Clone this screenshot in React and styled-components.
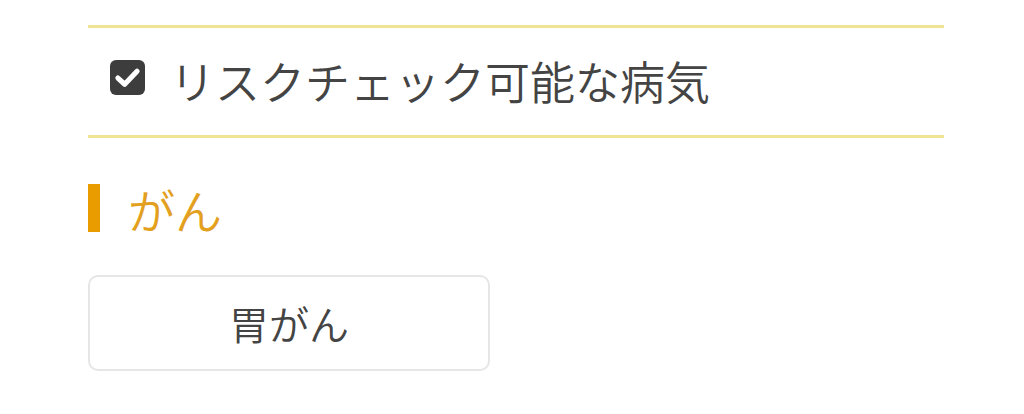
import styled, { createGlobalStyle } from "styled-components";

//==========================================================================
//  *** Styled components   ***

const GlobalStyle = createGlobalStyle`
    html, body {
        margin: 0;
        padding: 0;
        background: #ffffff;
    }
    body {
        font-family: "Noto Sans CJK JP", "Noto Sans", sans-serif;
        color: #444444;
    }
`

const Page = styled.main`
    width: 856px;
    margin-left: 88px;
    padding-top: 25px;
`

const CheckRow = styled.label`
    display: flex;
    align-items: center;
    gap: 25px;
    height: 105px;
    padding-left: 22px;
    padding-bottom: 2px;
    border-top: 3px solid #f1e394;
    border-bottom: 3px solid #f1e394;
    font-size: 45px;
    font-weight: 350;
    line-height: 1;
    color: #444444;
`

const CheckBox = styled.span`
    display: flex;
    align-items: center;
    justify-content: center;
    width: 35px;
    height: 35px;
    margin-bottom: 6px;
    border-radius: 6px;
    background-color: #3d3d3d;
    flex-shrink: 0;
`

const Heading = styled.h2`
    display: flex;
    align-items: center;
    gap: 28px;
    margin: 46px 0 0;
    height: 48px;
    font-size: 47px;
    font-weight: 350;
    line-height: 1;
    color: #e3a01e;

    &::before {
        content: "";
        display: block;
        width: 12px;
        height: 48px;
        background-color: #e99c00;
    }
`

const DiseaseButton = styled.button`
    display: flex;
    align-items: center;
    justify-content: center;
    box-sizing: border-box;
    width: 402px;
    height: 96px;
    margin-top: 43px;
    border: 2px solid #e6e6e6;
    border-radius: 10px;
    background: #ffffff;
    font-family: inherit;
    font-size: 40px;
    font-weight: 350;
    color: #444444;
    cursor: pointer;
`

//==========================================================================

function CheckIcon() {
    return (
        <svg width="27" height="27" viewBox="0 0 24 24">
            <path d="M3.5 12.5 L9.5 18 L20.5 6.5" fill="none" stroke="#ffffff" strokeWidth="4.6" strokeLinecap="round" strokeLinejoin="round" />
        </svg>
    )
}

function App() {
    return (
        <>
            <GlobalStyle />
            <Page>
                <CheckRow>
                    <CheckBox><CheckIcon /></CheckBox>
                    リスクチェック可能な病気
                </CheckRow>

                <Heading>がん</Heading>

                <DiseaseButton type="button">胃がん</DiseaseButton>
            </Page>
        </>
    )
}

export default App;
